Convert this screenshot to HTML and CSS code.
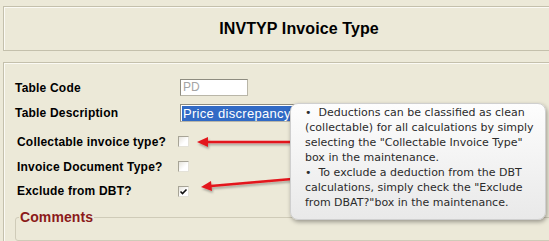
FILE: index.html
```html
<!DOCTYPE html>
<html>
<head>
<meta charset="utf-8" />
<title>INVTYP Invoice Type</title>
<link rel="stylesheet" href="styles.css">
</head>
<body>
<div class="page">
  <div class="header">INVTYP Invoice Type</div>

  <div class="panel">
    <div class="row">
      <span class="label">Table Code</span>
      <span class="input code">PD</span>
    </div>
    <div class="row">
      <span class="label">Table Description</span>
      <span class="input desc"><span class="sel">Price discrepancy</span></span>
    </div>
    <div class="row chk first">
      <span class="label">Collectable invoice type?</span>
      <span class="box"></span>
    </div>
    <div class="row chk">
      <span class="label">Invoice Document Type?</span>
      <span class="box"></span>
    </div>
    <div class="row chk last">
      <span class="label">Exclude from DBT?</span>
      <span class="box checked">
        <svg width="9" height="9" viewBox="0 0 9 9"><path d="M1.5 4.5 L3.5 6.5 L7.5 2.5" fill="none" stroke="#111" stroke-width="1.6"/></svg>
      </span>
    </div>

    <fieldset class="comments">
      <legend>Comments</legend>
    </fieldset>
  </div>

  <!-- annotation arrows -->
  <svg class="arrows" width="549" height="241" viewBox="0 0 549 241">
    <defs>
      <filter id="sh" x="-10%" y="-50%" width="120%" height="200%">
        <feDropShadow dx="1" dy="2" stdDeviation="1" flood-color="#000" flood-opacity="0.3"/>
      </filter>
    </defs>
    <g filter="url(#sh)" fill="#e3161c" stroke="#e3161c">
      <line x1="292" y1="142" x2="206" y2="142" stroke-width="2.5"/>
      <path d="M197 142 L208 137 L208 147 Z" stroke="none"/>
      <line x1="292" y1="179" x2="211" y2="186" stroke-width="2.5"/>
      <path d="M201 187 L211 181 L212 191 Z" stroke="none"/>
    </g>
  </svg>

  <div class="callout">
    &bull;&nbsp; Deductions can be classified as clean<br>
    (collectable) for all calculations by simply<br>
    selecting the "Collectable Invoice Type"<br>
    box in the maintenance.<br>
    &bull;&nbsp; To exclude a deduction from the DBT<br>
    calculations, simply check the "Exclude<br>
    from DBAT?"box in the maintenance.
  </div>
</div>
</body>
</html>
```

FILE: styles.css
```css
html,body{margin:0; padding:0;}
body{background:#ece9d8; width:549px; height:241px; overflow:hidden; font-family:"Liberation Sans", Arial, sans-serif; color:#000;}

.page{position:relative; padding:6px 0 0 3px; height:235px; overflow:hidden;}

/* title bar */
.header{width:590px; height:43px; border:1px solid #c4c0ac; box-shadow:inset 1px 1px 0 #fbfaf4; font-size:16px; font-weight:bold; line-height:43px; text-align:center; letter-spacing:0.1px;}

/* form panel */
.panel{margin-top:11px; width:590px; height:180px; border:1px solid #c4c0ac; box-shadow:inset 1px 1px 0 #fbfaf4; padding:12px 0 0 11px;}

.row{display:flex; align-items:center; height:25px;}
.label{width:165px; font-size:12px; font-weight:bold; letter-spacing:0.2px;}
.row.chk{padding-left:2px;}
.row.chk .label{width:161px;}
.row.first{margin-top:4px;}
.row.last{height:24px;}

.input{display:block; box-sizing:border-box; background:#fff; border:1px solid #b9b6a8; border-top-color:#8e8c80; border-left-color:#8e8c80; font-size:12px;}
.code{width:68px; height:17px; color:#a4a4a4; padding-left:2px; line-height:15px;}
.desc{width:140px; height:18px; padding:1px 0 0 1px;}
.sel{display:inline-block; background:#316ac5; color:#fff; font-size:13px; line-height:15px; padding:0 1px; letter-spacing:0.3px;}

.box{display:flex; align-items:center; justify-content:center; width:11px; height:11px; box-sizing:border-box; border:1px solid #a7a496; border-right-color:#e4e2d8; border-bottom-color:#e4e2d8; background:linear-gradient(135deg,#e6e4dc,#fff 60%);}

/* comments group */
.comments{margin:6px 0 0 0; padding:0; width:540px; height:30px; border:1px solid #cfcbb8; border-radius:3px;}
.comments legend{margin-left:3px; padding:0 1px; color:#8b1a1a; font-size:14px; font-weight:bold; letter-spacing:0.1px;}

/* overlays */
.arrows{position:absolute; left:0; top:0;}

.callout{position:absolute; left:290px; top:103px; width:256px; height:117px; box-sizing:border-box; padding:1px 0 0 14px; border:1px solid #cfcfcf; border-radius:8px; background:linear-gradient(#fdfdfd,#e9e9e9); box-shadow:1px 2px 4px rgba(0,0,0,0.35); font-family:"DejaVu Sans", sans-serif; font-size:11px; line-height:15px; color:#2b2b2b; white-space:nowrap;}
```
